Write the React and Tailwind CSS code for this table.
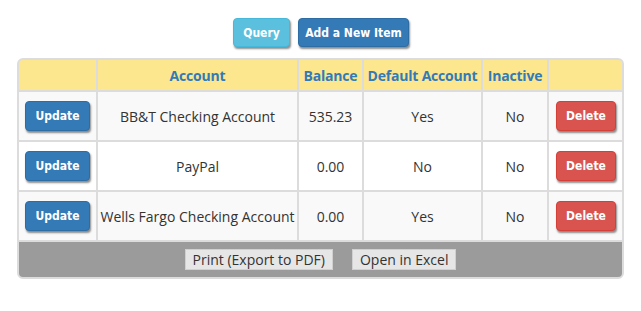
import React from "react";

const rows = [
  { name: "BB&T Checking Account", bal: "535.23", def: "Yes", inact: "No", bg: "bg-[#f9f9f9]" },
  { name: "PayPal", bal: "0.00", def: "No", inact: "No", bg: "bg-white" },
  { name: "Wells Fargo Checking Account", bal: "0.00", def: "Yes", inact: "No", bg: "bg-[#f9f9f9]" },
];

const btnFont = { fontFamily: '"DejaVu Sans Condensed", "DejaVu Sans", Verdana, sans-serif', fontStretch: "condensed" };

export default function App() {
  return (
    <div className="w-[641px] h-[311px] bg-white" style={{ fontFamily: '"Open Sans", "Noto Sans", sans-serif' }}>
      <div className="flex justify-center gap-[8px] pt-[18px] pl-[1px]">
        <button
          className="w-[57px] h-[29px] rounded-[4px] bg-[#5bc0de] border border-[#46b8da] text-white text-[12px] font-bold shadow-[1px_2px_2px_rgba(0,0,0,0.45)]"
          style={btnFont}
        >
          Query
        </button>
        <button
          className="w-[111px] h-[29px] rounded-[4px] bg-[#337ab7] border border-[#2e6da4] text-white text-[12px] font-bold shadow-[1px_2px_2px_rgba(0,0,0,0.45)]"
          style={btnFont}
        >
          Add a New Item
        </button>
      </div>
      <div className="ml-[17px] mt-[11px] w-[607px] rounded-[6px] border-2 border-[#dcdcdc] bg-[#dcdcdc] overflow-hidden">
        <div className="grid grid-cols-[77px_199px_63px_117px_64px_73px] gap-[2px]">
          <div className="h-[30px] bg-[#fce78f]" />
          {["Account", "Balance", "Default Account", "Inactive"].map((h) => (
            <div key={h} className="h-[30px] bg-[#fce78f] flex items-center justify-center text-[#337ab7] font-bold text-[14px] tracking-[-0.2px]">
              {h}
            </div>
          ))}
          <div className="h-[30px] bg-[#fce78f]" />
          {rows.map((r) => (
            <React.Fragment key={r.name}>
              <div className={`h-[48px] ${r.bg} flex items-center pl-[6px]`}>
                <button
                  className="w-[65px] h-[30px] rounded-[4px] bg-[#337ab7] border border-[#2e6da4] text-white text-[12px] font-bold shadow-[1px_2px_2px_rgba(0,0,0,0.45)]"
                  style={btnFont}
                >
                  Update
                </button>
              </div>
              <div className={`h-[48px] ${r.bg} flex items-center justify-center text-[#333] text-[14px]`}>{r.name}</div>
              <div className={`h-[48px] ${r.bg} flex items-center justify-center text-[#333] text-[14px]`}>{r.bal}</div>
              <div className={`h-[48px] ${r.bg} flex items-center justify-center text-[#333] text-[14px]`}>{r.def}</div>
              <div className={`h-[48px] ${r.bg} flex items-center justify-center text-[#333] text-[14px]`}>{r.inact}</div>
              <div className={`h-[48px] ${r.bg} flex items-center pl-[7px]`}>
                <button
                  className="w-[60px] h-[30px] rounded-[4px] bg-[#d9534f] border border-[#d43f3a] text-white text-[12px] font-bold shadow-[1px_2px_2px_rgba(0,0,0,0.45)]"
                  style={btnFont}
                >
                  Delete
                </button>
              </div>
            </React.Fragment>
          ))}
        </div>
        <div className="mt-[2px] h-[35px] bg-[#9b9b9b] flex items-center justify-center gap-[19px]">
          <button className="h-[21px] px-[7px] bg-[#e6e6e6] border border-[#d0d0d0] text-[#333] text-[14px] leading-none">
            Print (Export to PDF)
          </button>
          <button className="h-[21px] px-[7px] bg-[#e6e6e6] border border-[#d0d0d0] text-[#333] text-[14px] leading-none">
            Open in Excel
          </button>
        </div>
      </div>
    </div>
  );
}
